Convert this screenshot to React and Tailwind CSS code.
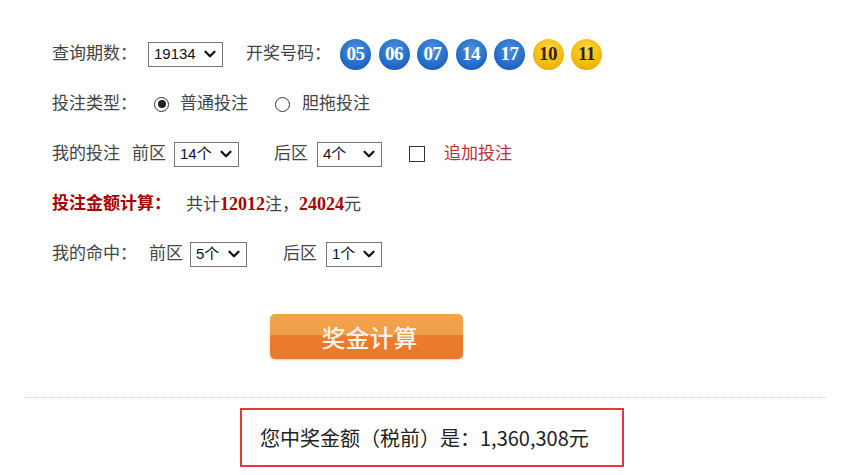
import React from 'react';
import { ChevronDown } from 'lucide-react';

const cn = "font-['Liberation_Serif','Noto_Sans_CJK_SC',serif]";

const Select = ({ value, w }) => (
    <div className={`flex items-center justify-between h-[25px] border border-[#767676] bg-white pl-[5px] pr-[3px] font-['Liberation_Sans','Noto_Sans_CJK_SC',sans-serif] text-[15px] text-[#111] ${w}`}>
        <span>{value}</span>
        <ChevronDown size={18} strokeWidth={3} className="text-[#111]" />
    </div>
);

const Ball = ({ n, gold }) => (
    <div
        className={`w-[31px] h-[31px] rounded-full flex items-center justify-center font-['Liberation_Serif',serif] font-bold text-[19px] tracking-[-0.5px] ${
            gold
                ? 'bg-[radial-gradient(circle_at_50%_35%,#ffd84a,#f0b400_70%,#d89a00)] text-[#3a1d00]'
                : 'bg-[radial-gradient(circle_at_50%_35%,#4a92e0,#1f66c4_70%,#1550a0)] text-white'
        }`}
    >
        {n}
    </div>
);

const Label = ({ children, className = '' }) => (
    <span className={`text-[17px] text-[#444] ${className}`}>{children}</span>
);

export default function App() {
    const balls = ['05', '06', '07', '14', '17'];
    return (
        <div className={`w-[849px] h-[475px] bg-white ${cn} overflow-hidden`}>
            <div className="pl-[52px] pt-[29px]">
                <div className="h-[50px] flex items-center">
                    <Label>查询期数：</Label>
                    <div className="ml-[11px]"><Select value="19134" w="w-[75px]" /></div>
                    <Label className="ml-[23px]">开奖号码：</Label>
                    <div className="ml-[9px] flex gap-[7.5px]">
                        {balls.map((b) => <Ball key={b} n={b} />)}
                        <Ball n="10" gold />
                        <Ball n="11" gold />
                    </div>
                </div>

                <div className="h-[50px] flex items-center">
                    <Label>投注类型：</Label>
                    <div className="ml-[17px] w-[15px] h-[15px] rounded-full border border-[#333] flex items-center justify-center">
                        <div className="w-[8px] h-[8px] rounded-full bg-[#222]" />
                    </div>
                    <Label className="ml-[11px]">普通投注</Label>
                    <div className="ml-[27px] w-[15px] h-[15px] rounded-full border border-[#333]" />
                    <Label className="ml-[12px]">胆拖投注</Label>
                </div>

                <div className="h-[50px] flex items-center">
                    <Label>我的投注</Label>
                    <Label className="ml-[12px]">前区</Label>
                    <div className="ml-[8px]"><Select value="14个" w="w-[65px]" /></div>
                    <Label className="ml-[35px]">后区</Label>
                    <div className="ml-[9px]"><Select value="4个" w="w-[65px]" /></div>
                    <div className="ml-[27px] w-[16px] h-[16px] border border-[#333] bg-white" />
                    <Label className="ml-[19px] text-[#b83232]">追加投注</Label>
                </div>

                <div className="h-[50px] flex items-center">
                    <span className="text-[17px] font-bold text-[#a80000]">投注金额计算：</span>
                    <Label className="ml-[15px]">
                        共计<b className="text-[#a80000] text-[18px]">12012</b>注，<b className="text-[#a80000] text-[18px]">24024</b>元
                    </Label>
                </div>

                <div className="h-[50px] flex items-center">
                    <Label>我的命中：</Label>
                    <Label className="ml-[12px]">前区</Label>
                    <div className="ml-[7px]"><Select value="5个" w="w-[57px]" /></div>
                    <Label className="ml-[36px]">后区</Label>
                    <div className="ml-[9px]"><Select value="1个" w="w-[56px]" /></div>
                </div>
            </div>

            <div className="pl-[270px] pt-[35px]">
                <button className="w-[193px] h-[45px] rounded-[5px] bg-[linear-gradient(#f2a24a_0%,#f0a048_46%,#ea7c2c_46%,#ea7a2a_100%)] shadow-[0_1px_2px_rgba(0,0,0,0.2)] text-[#fdf3ea] text-[24px] font-medium font-['Noto_Sans_CJK_SC',sans-serif] pl-[6px]">
                    奖金计算
                </button>
            </div>

            <div className="mx-[25px] w-[800px] mt-[38px] border-t border-dotted border-[#c8c8c8]" />

            <div className="ml-[240px] mt-[10px] w-[384px] h-[59px] border-2 border-[#e8383d] flex items-center pl-[18px]">
                <span className="text-[20px] text-[#222] font-['Noto_Sans_CJK_SC',sans-serif]">
                    您中奖金额（税前）是：1,360,308元
                </span>
            </div>
        </div>
    );
}
